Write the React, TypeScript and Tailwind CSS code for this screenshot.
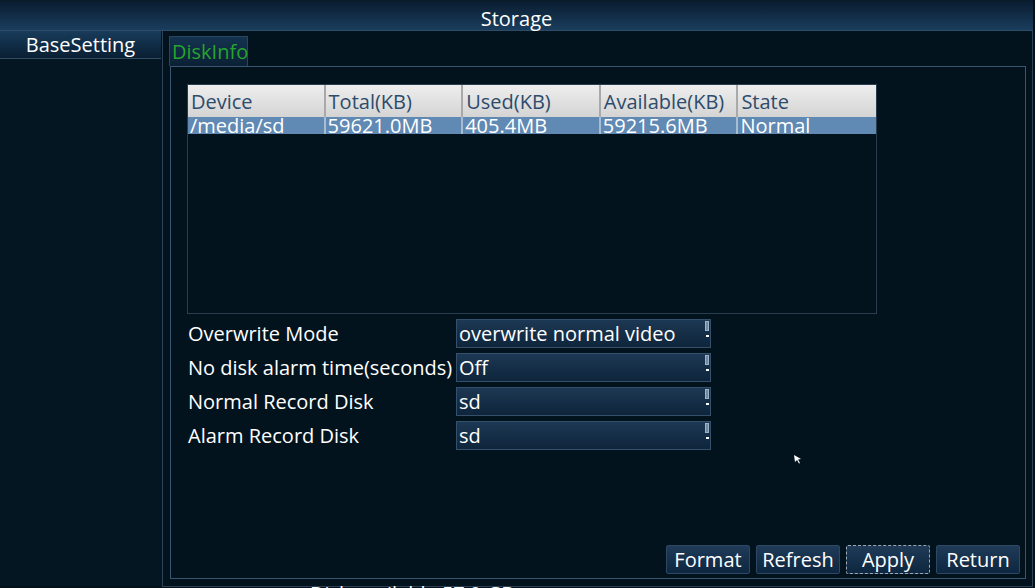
import React from "react";

const cols = ["Device", "Total(KB)", "Used(KB)", "Available(KB)", "State"];
const row = ["/media/sd", "59621.0MB", "405.4MB", "59215.6MB", "Normal"];

const fields: [string, string][] = [
  ["Overwrite Mode", "overwrite normal video"],
  ["No disk alarm time(seconds)", "Off"],
  ["Normal Record Disk", "sd"],
  ["Alarm Record Disk", "sd"],
];

function Select({ value }: { value: string }) {
  return (
    <div className="relative w-[255px] h-[29px] border border-[#34506b] bg-gradient-to-b from-[#1d3854] to-[#0e253b] text-white text-[20px] leading-[27px] pl-[2px] whitespace-nowrap">
      {value}
      <div className="absolute right-[1px] top-[1px] w-[4px] h-[25px] flex flex-col items-center">
        <div className="w-[4px] h-[10px] border border-[#9fb3c4] bg-[#6f8aa3]" />
        <div className="mt-[4px] w-[3px] h-[2px] bg-white" />
      </div>
    </div>
  );
}

function Btn({ label, focused }: { label: string; focused?: boolean }) {
  return (
    <div
      className={
        "h-[29px] w-[84px] rounded-[2px] bg-gradient-to-b from-[#1f3b58] to-[#0e2740] text-white text-[20px] leading-[27px] text-center " +
        (focused ? "border border-dashed border-[#9aa9b6]" : "border border-[#2c4862]")
      }
    >
      {label}
    </div>
  );
}

export default function App() {
  return (
    <div className="relative w-[1035px] h-[588px] overflow-hidden bg-[#050f17] font-['Open_Sans',sans-serif]">
      <div className="w-[1033px] h-[587px] bg-[#02131e] flex flex-col">
        {/* title bar */}
        <div className="h-[31px] border-t border-[#0a1a28] border-b border-b-[#2f4c66] bg-gradient-to-b from-[#0a1d31] to-[#1a3e5e] text-white text-[20px] leading-[36px] text-center">
          Storage
        </div>
        <div className="flex flex-1 min-h-0">
          {/* left column */}
          <div className="w-[162px] flex flex-col">
            <div className="w-[161px] h-[28px] bg-gradient-to-b from-[#183c5b] to-[#0a1f33] border-b border-[#314c63] text-white text-[20px] leading-[28px] text-center whitespace-nowrap">
              BaseSetting
            </div>
            <div className="flex-1 bg-[#031622] mb-[1px]" />
          </div>
          {/* main panel */}
          <div className="flex-1 border border-[#2b4257] border-t-0 flex flex-col">
            <div className="h-[35px] pl-[6px] pt-[5px] flex">
              <div className="w-[79px] h-[30px] bg-gradient-to-b from-[#143350] to-[#0b2034] border border-b-0 border-[#2a4560] text-[#25a52d] text-[20px] leading-[30px] pl-[2px] whitespace-nowrap">
                DiskInfo
              </div>
            </div>
            <div className="flex-1 ml-[7px] mr-[6px] mb-[7px] border border-[#3a5670] flex flex-col pl-[16px] pr-[5px] pt-[17px] pb-[4px]">
              {/* table */}
              <div className="w-[690px] h-[230px] border border-[#2a3d4e] bg-[#03131e] flex flex-col">
                <div className="flex h-[32px] bg-gradient-to-b from-[#eeeeee] to-[#d4d4d4]">
                  {cols.map((c, i) => (
                    <div
                      key={c}
                      className={
                        "w-[138px] text-[#2d4b6b] text-[20px] leading-[31px] pt-[1px] pl-[3px] whitespace-nowrap " +
                        (i < 4 ? "border-r-2 border-[#a9a9a9]" : "")
                      }
                    >
                      {c}
                    </div>
                  ))}
                </div>
                <div className="flex h-[17px] bg-[#6089b3] overflow-hidden">
                  {row.map((c, i) => (
                    <div
                      key={c}
                      className={
                        "w-[138px] text-white text-[20px] leading-[17px] pl-[2px] whitespace-nowrap " +
                        (i < 4 ? "border-r-2 border-[#a9bdd2]" : "")
                      }
                    >
                      {c}
                    </div>
                  ))}
                </div>
              </div>
              {/* form */}
              <div className="flex flex-col gap-[5px] mt-[5px]">
                {fields.map(([l, v]) => (
                  <div key={l} className="flex items-center h-[29px]">
                    <div className="w-[269px] pl-[1px] text-white text-[20px] whitespace-nowrap">{l}</div>
                    <Select value={v} />
                  </div>
                ))}
              </div>
              <div className="flex-1" />
              <div className="flex justify-end gap-[6px]">
                <Btn label="Format" />
                <Btn label="Refresh" />
                <Btn label="Apply" focused />
                <Btn label="Return" />
              </div>
            </div>
          </div>
        </div>
      </div>
      {/* cursor */}
      <svg className="absolute left-[794px] top-[455px]" width="8" height="9" viewBox="0 0 8 9">
        <path d="M0 0 L7 4 L4 4.5 L6 8 L5 8.5 L3 5 L1 7 Z" fill="#ffffff" />
      </svg>
      {/* clipped status text */}
      <div className="absolute left-[310px] top-[583px] text-white text-[20px] leading-[22px] whitespace-nowrap">
        Disk available 57.9 GB
      </div>
    </div>
  );
}
